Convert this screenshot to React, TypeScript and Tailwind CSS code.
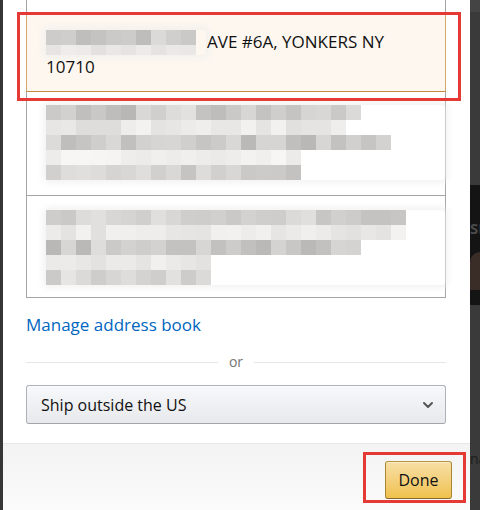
import { ChevronDown } from "lucide-react";

type Row = { n: number; lo: number; hi: number; h: number };

// deterministic gray mosaic values for the redacted lines
function mosaic(rows: Row[], seed: number) {
  let s = seed;
  const next = () => {
    s = (s * 9301 + 49297) % 233280;
    return s / 233280;
  };
  return rows.map((r) =>
    Array.from({ length: r.n }, () => {
      const v = Math.round(r.lo + (r.hi - r.lo) * next());
      return `rgb(${v},${v - 2},${v - 4})`;
    })
  );
}

const selectedRows: Row[] = [
  { n: 10, lo: 188, hi: 224, h: 15 },
  { n: 10, lo: 226, hi: 242, h: 10 },
];
const secondRows: Row[] = [
  { n: 21, lo: 184, hi: 228, h: 15 },
  { n: 20, lo: 222, hi: 244, h: 15 },
  { n: 23, lo: 184, hi: 222, h: 15 },
  { n: 17, lo: 236, hi: 250, h: 15 },
  { n: 17, lo: 196, hi: 226, h: 15 },
];
const thirdRows: Row[] = [
  { n: 24, lo: 190, hi: 226, h: 15 },
  { n: 24, lo: 226, hi: 244, h: 15 },
  { n: 21, lo: 184, hi: 224, h: 15 },
  { n: 11, lo: 226, hi: 242, h: 15 },
  { n: 11, lo: 204, hi: 232, h: 15 },
];

function Mosaic({ rows, seed }: { rows: Row[]; seed: number }) {
  const data = mosaic(rows, seed);
  return (
    <div className="flex flex-col rounded-sm shadow-[0_0_6px_3px_rgba(236,236,236,0.7)]">
      {data.map((row, i) => (
        <div key={i} className="flex">
          {row.map((c, j) => (
            <div
              key={j}
              className="w-[15px]"
              style={{ backgroundColor: c, height: rows[i].h }}
            />
          ))}
        </div>
      ))}
    </div>
  );
}

export default function App() {
  return (
    <div className="relative w-[480px] h-[510px] flex bg-[#3a3a3a] overflow-hidden font-['Open_Sans',sans-serif] text-[#111]">
      {/* left backdrop strip */}
      <div className="w-[3px] shrink-0 bg-[#363636]" />

      {/* modal */}
      <div className="w-[467px] shrink-0 flex flex-col bg-white">
        <div className="pl-[23px] pr-[24px] pb-[19px]">
          <div className="flex flex-col">
            {/* previous item, scrolled out of view */}
            <div className="h-[14px] border-x border-[#a6a6a6]" />

            {/* selected address */}
            <div className="border border-[#d8a470] border-t-[#c98a4e] border-b-[#c4893f] bg-[#fdf7f0] pt-[15px] pb-[12px] pl-[19px] pr-4 text-[17px] leading-[24px]">
              <div className="flex items-start">
                <div className="w-[160px]">
                  <Mosaic rows={selectedRows} seed={7} />
                </div>
                <span className="ml-[1px]">AVE #6A, YONKERS NY</span>
              </div>
              <div>10710</div>
            </div>

            {/* other addresses */}
            <div className="border-x border-b border-[#a6a6a6] h-[104px] pt-[13px] pl-[19px]">
              <Mosaic rows={secondRows} seed={31} />
            </div>
            <div className="border-x border-b border-[#a6a6a6] h-[102px] pt-[14px] pl-[19px]">
              <Mosaic rows={thirdRows} seed={57} />
            </div>
          </div>

          <div className="mt-[15px] text-[17px] leading-[24px] text-[#0066c0]">
            Manage address book
          </div>

          <div className="mt-[15px] flex items-center gap-[11px]">
            <div className="flex-1 h-px bg-[#e7e7e7]" />
            <span className="text-[14px] leading-[20px] text-[#767676]">or</span>
            <div className="flex-1 h-px bg-[#e7e7e7]" />
          </div>

          <div className="mt-[13px] h-[39px] flex items-center justify-between rounded-[3px] border border-[#adb1b8] border-b-[#a2a6ac] bg-gradient-to-b from-[#f7f8fa] to-[#e7e9ec] pl-[14px] pr-[9px] shadow-[0_1px_0_rgba(255,255,255,0.6)_inset]">
            <span className="text-[16px] leading-[24px]">Ship outside the US</span>
            <ChevronDown className="w-[16px] h-[16px] text-[#555]" strokeWidth={3} />
          </div>
        </div>

        {/* footer */}
        <div className="flex-1 border-t border-[#e7e7e7] bg-gradient-to-b from-[#f3f3f3] to-[#fbfbfb] flex justify-end items-start pt-[17px] pr-[18px]">
          <button className="w-[67px] h-[38px] rounded-[3px] border border-[#a88734] border-t-[#b8953e] border-b-[#846a29] bg-gradient-to-b from-[#f7dfa5] to-[#f0c14b] text-[16px] text-[#111] shadow-[0_1px_0_rgba(255,255,255,0.4)_inset]">
            Done
          </button>
        </div>
      </div>

      {/* right backdrop: partially visible page */}
      <div className="flex-1 flex flex-col overflow-hidden">
        <div className="h-[12px] bg-[#444]" />
        <div className="h-[173px]" />
        <div className="h-[120px] bg-[#141414] flex flex-col">
          <div className="mt-[36px] text-[15px] font-bold text-[#4a4a4a] leading-none">SF</div>
          <div className="mt-[16px] h-[38px] rounded-tl-full bg-[#3a2d28]" />
        </div>
        <div className="flex-1 pt-[147px] text-[14px] text-[#1c1c1c] leading-none">na</div>
      </div>

      {/* annotation boxes */}
      <div className="absolute left-[17px] top-[12px] w-[444px] h-[89px] border-[3px] border-[#e53935]" />
      <div className="absolute left-[363px] top-[452px] w-[103px] h-[51px] border-[3px] border-[#e53935]" />
    </div>
  );
}
